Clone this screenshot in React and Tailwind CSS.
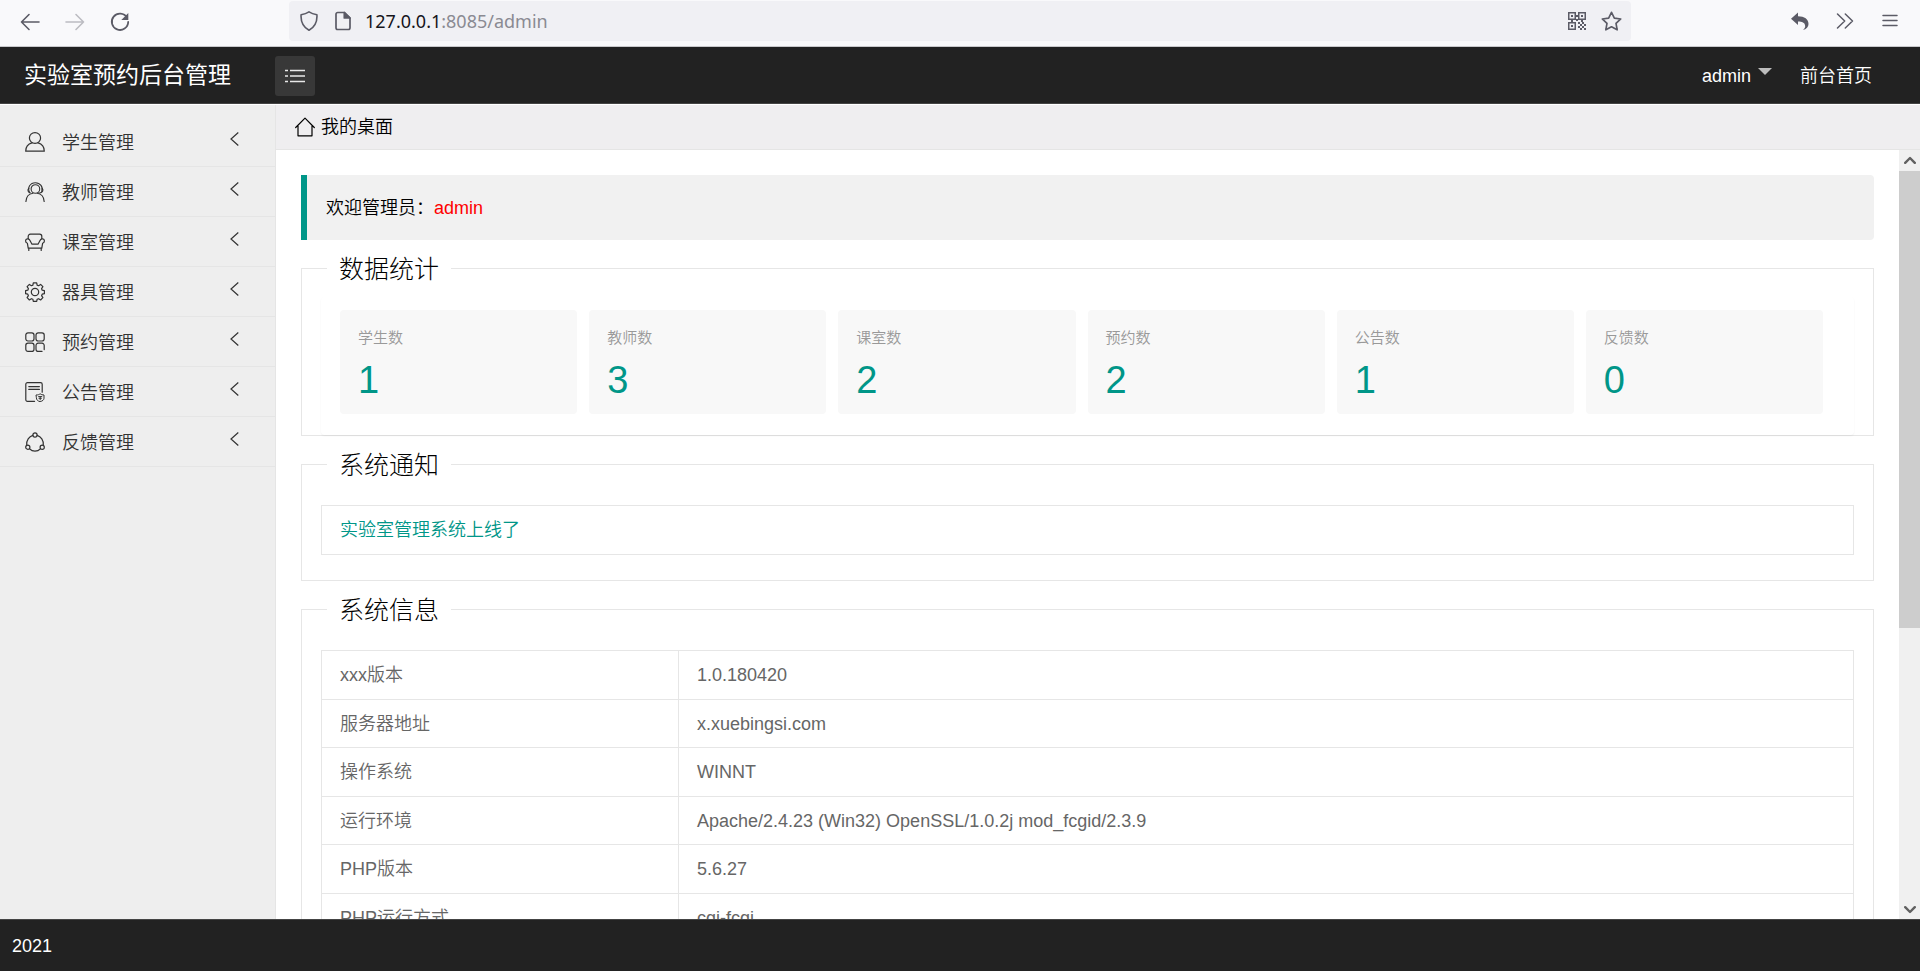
const menuItems = [
  { title: "学生管理", icon: StudentIcon },
  { title: "教师管理", icon: TeacherIcon },
  { title: "课室管理", icon: SofaIcon },
  { title: "器具管理", icon: GearIcon },
  { title: "预约管理", icon: GridIcon },
  { title: "公告管理", icon: NoticeIcon },
  { title: "反馈管理", icon: ShareIcon },
]

const stats = [
  { label: "学生数", value: 1 },
  { label: "教师数", value: 3 },
  { label: "课室数", value: 2 },
  { label: "预约数", value: 2 },
  { label: "公告数", value: 1 },
  { label: "反馈数", value: 0 },
]

const systemInfo = [
  ["xxx版本", "1.0.180420"],
  ["服务器地址", "x.xuebingsi.com"],
  ["操作系统", "WINNT"],
  ["运行环境", "Apache/2.4.23 (Win32) OpenSSL/1.0.2j mod_fcgid/2.3.9"],
  ["PHP版本", "5.6.27"],
  ["PHP运行方式", "cgi-fcgi"],
]

function Icon({ children, className = "size-5", strokeWidth = 1.2 }) {
  return (
    <svg
      viewBox="0 0 20 20"
      className={className}
      fill="none"
      stroke="currentColor"
      strokeWidth={strokeWidth}
      strokeLinecap="round"
      strokeLinejoin="round"
      aria-hidden="true"
    >
      {children}
    </svg>
  )
}

function StudentIcon() {
  return (
    <Icon>
      <ellipse cx="10" cy="6" rx="5.6" ry="5.4" />
      <path d="M7 10.900C3.200 12 .7 14.900.7 19.200h18.600c0-4.300-2.500-7.200-6.300-8.300" />
    </Icon>
  )
}

function TeacherIcon() {
  return (
    <Icon strokeWidth={1.1}>
      <circle cx="10.400" cy="7" r="4.300" />
      <path d="M4.600 10.600C2 5.600 5.200.700 10.400.700c4.800 0 8 4.300 6.400 9" />
      <path d="M3.900 6.300c-1.600 1.300-1.200 4 1.300 4.600M17.200 6.300c1.600 1.900.600 4.500-3.300 5" />
      <path d="M.9 19.600c.3-4.600 3-7.900 7-8.400M19.200 19.600c-.3-4.600-3-7.900-7-8.400" />
    </Icon>
  )
}

function SofaIcon() {
  return (
    <Icon>
      <path d="M3.200 7V4.400c0-1.300.8-2.200 2.200-2.200h9.200c1.400 0 2.200.9 2.200 2.200V7" />
      <path d="M3.200 6.800c-1.500-.2-2.600.8-2.600 2.200 0 1.100.8 2 1.800 2.300l.8 4.900h13.600l.8-4.900c1-.3 1.800-1.200 1.800-2.300 0-1.400-1.100-2.400-2.600-2.200-1.100.2-1.600 1-1.900 2l-1.900 3.400H7l-1.900-3.400c-.3-1-.8-1.800-1.900-2z" />
      <path d="M3.800 16.400v2M16.200 16.400v2" />
    </Icon>
  )
}

function GearIcon() {
  return (
    <Icon>
      <circle cx="10" cy="10" r="3.700" />
      <path d="M8.300.8h3.400l.4 2.300 1.500.6 2-1.300 2.300 2.300-1.300 2 .6 1.500 2.200.4v3.100l-2.200.5-.6 1.500 1.300 2-2.300 2.300-2-1.300-1.500.6-.4 2.100H8.300l-.4-2.100-1.500-.6-2 1.300-2.300-2.300 1.300-2-.6-1.500-2.200-.5V8.600l2.200-.4.6-1.500-1.300-2 2.300-2.300 2 1.300 1.500-.6z" />
    </Icon>
  )
}

function GridIcon() {
  return (
    <Icon>
      <rect x=".8" y=".8" width="8.200" height="8.200" rx="2.200" />
      <rect x="11" y=".8" width="8.200" height="8.200" rx="2.200" />
      <rect x=".8" y="11.200" width="8.200" height="8.200" rx="2.200" />
      <path d="M17 19.400h-3.800a2.200 2.200 0 0 1-2.200-2.200v-3.800a2.200 2.200 0 0 1 2.200-2.200H17a2.200 2.200 0 0 1 2.200 2.200v4.200" />
    </Icon>
  )
}

function NoticeIcon() {
  return (
    <Icon>
      <path d="M9.600 19.300H2.400A1.600 1.600 0 0 1 .8 17.700V2.300A1.600 1.600 0 0 1 2.400.7h13.200a1.600 1.600 0 0 1 1.600 1.600v7.900M3.800 4.600h10.600M3.800 7.400h10.600" />
      <path d="M11.400 13c1.600 0 2.700-.4 3.700-1.200 1 .8 2.200 1.200 3.900 1.200v3.200c0 1.700-1.400 2.800-3.900 3.500-2.400-.7-3.700-1.800-3.700-3.500zM13.600 14.600h3.200M15.200 14.600v3.200M14 16.300h2.400" strokeWidth="1" />
    </Icon>
  )
}

function ShareIcon() {
  return (
    <Icon>
      <circle cx="10" cy="3" r="2.100" />
      <circle cx="2.800" cy="15.200" r="2.100" />
      <circle cx="17.200" cy="15.200" r="2.100" />
      <path d="M7.800 3.300C4 4.400 1.300 8.400 1.700 13M12.200 3.300c3.800 1.100 6.500 5.100 6.100 9.700M4.600 16.800c3 3.100 7.800 3.100 10.800 0" />
    </Icon>
  )
}

function QrIcon() {
  return (
    <svg viewBox="0 0 18 18" className="size-[18px]" fill="currentColor" aria-hidden="true">
      <path fillRule="evenodd" d="M0 0h8v8H0zM1.500 1.500v5h5v-5zM10 0h8v8h-8zM11.500 1.500v5h5v-5zM0 10h8v8H0zM1.500 11.500v5h5v-5z" />
      <path d="M3 3h2v2H3zM13 3h2v2h-2zM3 13h2v2H3zM8 3h2v2H8zM8 7h2v2H8zM3 8h2v2H3zM13 8h2v2h-2zM10 10h2v2h-2zM14 10h2v2h-2zM12 12h2v2h-2zM16 12h2v2h-2zM10 14h2v2h-2zM14 14h2v2h-2zM12 16h2v2h-2zM16 16h2v2h-2z" />
    </svg>
  )
}

function BrowserBar() {
  return (
    <div className="flex h-[47px] shrink-0 items-start border-b border-[#c9c9cc] bg-[#f9f9fb] text-[#5b5b66]">
      <div className="flex h-11 w-[289px] items-center gap-[25px] pl-5">
        <button type="button" aria-label="后退">
          <Icon strokeWidth={1.600}>
            <path d="M19 10H1.500M9 2.500 1.500 10 9 17.500" />
          </Icon>
        </button>
        <button type="button" aria-label="前进" className="text-[#bcbcc2]">
          <Icon strokeWidth={1.600}>
            <path d="M1 10h17.500M11 2.500l7.500 7.500-7.500 7.500" />
          </Icon>
        </button>
        <button type="button" aria-label="刷新">
          <Icon strokeWidth={1.800}>
            <path d="M17 5.500A8.200 8.200 0 1 0 18.200 10" />
            <path d="M18.300 1v7h-7z" fill="currentColor" stroke="none" />
          </Icon>
        </button>
      </div>
      <div className="mt-px flex h-10 flex-1 items-center rounded bg-[#f0f0f4] pr-[9px] pl-[10px]">
        <Icon strokeWidth={1.600}>
          <path d="M10 .8c2.600 1.700 5 2.400 7.900 2.900.5 6.600-1.600 12-7.900 15.600C3.700 15.700 1.600 10.300 2.100 3.700 5 3.200 7.400 2.500 10 .8z" />
        </Icon>
        <Icon className="ml-[14px] size-5" strokeWidth={1.700}>
          <path d="M11.500 1.500H4.700A1.700 1.700 0 0 0 3 3.200v13.600a1.700 1.700 0 0 0 1.700 1.700h10.600a1.700 1.700 0 0 0 1.700-1.700V7z" />
          <path d="M11.300 1.500V7H17z" fill="currentColor" />
        </Icon>
        <div className="ml-3 flex-1 font-['Noto_Sans',sans-serif] text-lg font-normal text-[#8a8a92]">
          <span className="text-[#15141a]">127.0.0.1</span>:8085/admin
        </div>
        <QrIcon />
        <Icon className="ml-[15px] size-[21px]" strokeWidth={1.600}>
          <path d="m10 1.200 2.700 5.600 6.100.8-4.500 4.200 1.100 6.100-5.400-2.900-5.400 2.900 1.100-6.100L1.200 7.600l6.100-.8z" />
        </Icon>
      </div>
      <div className="flex h-[42px] w-[289px] items-center justify-end gap-[25px] pr-5">
        <svg viewBox="0 0 20 20" className="size-5" fill="currentColor" aria-hidden="true">
          <path d="M1 7.700 8 1.600v3.700c6.500 0 10.500 3 10.500 7.800 0 3-2 5.300-5.700 6 2-1.700 2.600-3 2.300-4.700-.4-2.600-3-3.800-7.100-3.800v3.500z" />
        </svg>
        <Icon strokeWidth={1.500}>
          <path d="m2.500 3 7.200 7-7.200 7M10.300 3l7.200 7-7.200 7" />
        </Icon>
        <Icon strokeWidth={1.500}>
          <path d="M3 4.500h14M3 9.500h14M3 14.500h14" />
        </Icon>
      </div>
    </div>
  )
}

function Header() {
  return (
    <header className="flex h-[57px] shrink-0 items-center border-b border-[#444] bg-[#222] pt-px text-lg text-white">
      <h1 className="w-[275px] pl-6 text-[23px] font-normal">实验室预约后台管理</h1>
      <button
        type="button"
        aria-label="菜单"
        className="flex size-10 items-center justify-center rounded-[3px] bg-[#383838]"
      >
        <svg viewBox="0 0 20 14" className="h-[14px] w-5" stroke="#e8e8e8" strokeWidth="1.600" aria-hidden="true">
          <path d="M0 1.500h3M5 1.500h15M0 7h3M5 7h15M0 12.500h3M5 12.500h15" />
        </svg>
      </button>
      <nav className="ml-auto flex items-center pr-12">
        <a href="#" className="flex items-center gap-[7px]">
          admin
          <svg viewBox="0 0 14 7" className="mb-2 h-[7px] w-[14px]" fill="#bdbdbd" aria-hidden="true">
            <path d="M0 0h14L7 7z" />
          </svg>
        </a>
        <a href="#" className="ml-7">前台首页</a>
      </nav>
    </header>
  )
}

function Sidebar() {
  return (
    <nav className="w-[276px] shrink-0 border-r border-[#e5e5e5] bg-[#eee] pt-3 text-lg text-[#333]">
      <ul>
        {menuItems.map((item) => (
          <li key={item.title}>
            <a href="#" className="flex h-[50px] items-center border-b border-[#e5e5e5] pr-9 pl-[25px]">
              <item.icon />
              <span className="mt-[2px] ml-[17px]">{item.title}</span>
              <svg
                viewBox="0 0 9 14"
                className="mb-[6px] ml-auto h-[14px] w-[9px]"
                fill="none"
                stroke="currentColor"
                strokeWidth="1.200"
                aria-hidden="true"
              >
                <path d="M8.300.5 1 7l7.300 6.500" />
              </svg>
            </a>
          </li>
        ))}
      </ul>
    </nav>
  )
}

function Panel({ title, className = "", children }) {
  return (
    <fieldset className={`mt-[11px] min-w-0 border border-[#e6e6e6] px-[19px] ${className}`}>
      <legend className="ml-[6px] px-3 pt-[2px] text-[25px] leading-8 font-light text-black">{title}</legend>
      {children}
    </fieldset>
  )
}

function ScrollBar() {
  return (
    <div className="flex w-[21px] shrink-0 flex-col bg-[#f0f0f0] text-[#606060]" aria-hidden="true">
      <div className="flex h-[21px] items-center justify-center">
        <Icon className="size-3" strokeWidth={4}>
          <path d="m2 13 8-8 8 8" />
        </Icon>
      </div>
      <div className="h-[457px] bg-[#cdcdcd]" />
      <div className="mt-auto flex h-[21px] items-center justify-center">
        <Icon className="size-3" strokeWidth={4}>
          <path d="m2 7 8 8 8-8" />
        </Icon>
      </div>
    </div>
  )
}

export default function App() {
  return (
    <div className="flex h-screen flex-col overflow-hidden bg-white font-['Liberation_Sans','Noto_Sans_CJK_SC',sans-serif] font-[350] text-black">
      <BrowserBar />
      <Header />
      <div className="flex min-h-0 flex-1 border-t border-white">
        <Sidebar />
        <div className="flex min-w-0 flex-1 flex-col">
          <div className="flex h-[45px] shrink-0 items-center border-b border-[#e5e5e5] bg-[#efeef0] pl-[19px] text-lg">
            <Icon>
              <path d="M.7 10.500 10 1.200l9.300 9.300M3 9v9.800h14V9" />
            </Icon>
            <span className="ml-[6px]">我的桌面</span>
          </div>
          <div className="flex min-h-0 flex-1">
            <main className="min-w-0 flex-1 overflow-hidden px-[25px] pt-[25px]">
              <blockquote className="flex h-[65px] items-center rounded-r-sm border-l-6 border-[#009688] bg-[#f1f1f1] pl-[19px] text-lg">
                欢迎管理员：<span className="text-[#f00]">admin</span>
              </blockquote>

              <Panel title="数据统计">
                <div className="mt-3 grid grid-cols-6 gap-3 rounded-sm pt-[13px] pr-[31px] pb-[21px] pl-[19px] shadow-[0_1px_2px_0_rgba(0,0,0,0.05)]">
                  {stats.map((stat) => (
                    <a key={stat.label} href="#" className="block h-[104px] rounded-sm bg-[#f8f8f8] px-[18px] pt-[13px]">
                      <h3 className="text-[15px] leading-[30px] text-[#999]">{stat.label}</h3>
                      <p className="text-[38px] leading-[54px] text-[#009688]">{stat.value}</p>
                    </a>
                  ))}
                </div>
              </Panel>

              <Panel title="系统通知" className="pb-[25px]">
                <table className="mt-6 w-full border-collapse text-lg">
                  <tbody>
                    <tr className="h-[49px]">
                      <td className="border border-[#e6e6e6] px-[18px]">
                        <a href="#" className="text-[#009688]">实验室管理系统上线了</a>
                      </td>
                    </tr>
                  </tbody>
                </table>
              </Panel>

              <Panel title="系统信息" className="pb-[25px]">
                <table className="mt-6 w-full table-fixed border-collapse text-lg text-[#666]">
                  <tbody>
                    {systemInfo.map(([name, value]) => (
                      <tr key={name} className="odd:h-[49px] even:h-12">
                        <th scope="row" className="w-[357px] border border-[#e6e6e6] px-[18px] text-left font-[350]">
                          {name}
                        </th>
                        <td className="border border-[#e6e6e6] px-[18px]">{value}</td>
                      </tr>
                    ))}
                  </tbody>
                </table>
              </Panel>
            </main>
            <ScrollBar />
          </div>
        </div>
      </div>
      <footer className="flex h-[52px] shrink-0 items-center border-t border-[#444] bg-[#222] pl-3 text-lg text-white">
        2021
      </footer>
    </div>
  )
}
